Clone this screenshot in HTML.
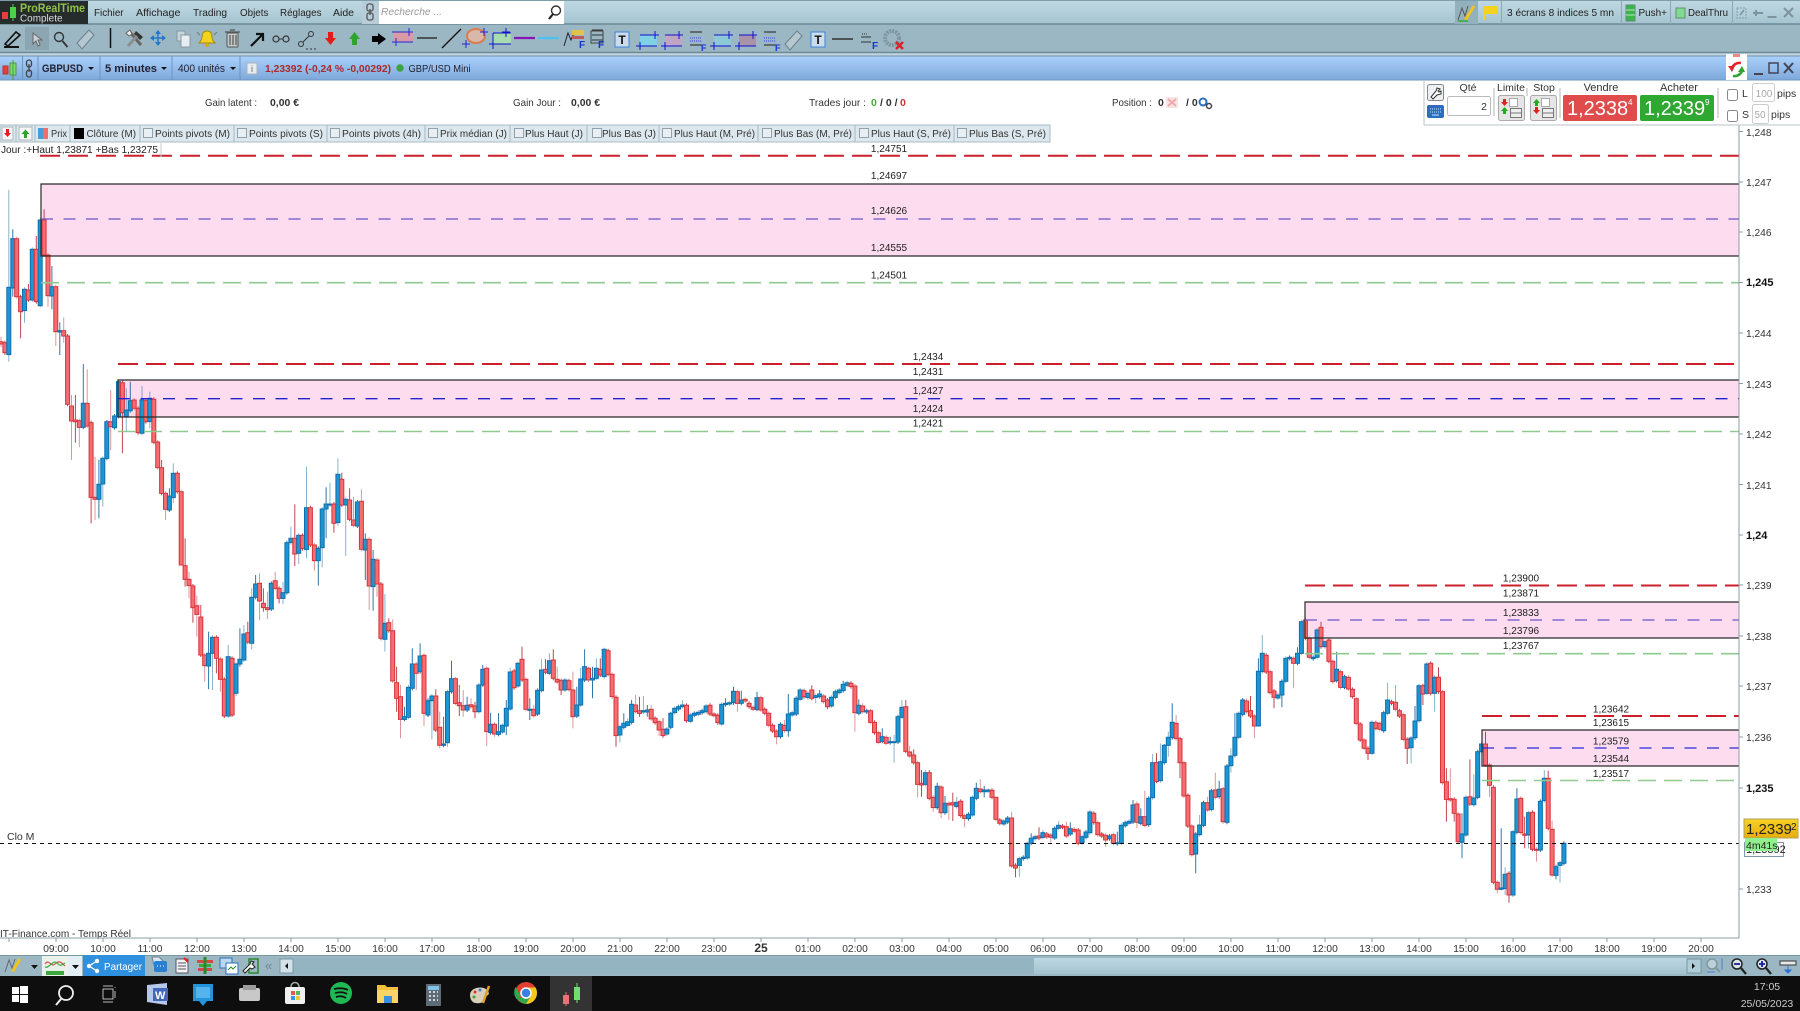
<!DOCTYPE html>
<html lang="fr"><head><meta charset="utf-8"><title>ProRealTime GBPUSD</title>
<style>
html,body{margin:0;padding:0;background:#fff;width:1800px;height:1011px;overflow:hidden}
svg{display:block;font-family:"Liberation Sans",sans-serif;font-size:10.5px;fill:#222;filter:blur(.35px)}
text{white-space:pre}
.b{font-weight:bold}
.ax{font-size:10.2px;fill:#333}
.tab{font-size:10.5px;fill:#333}
.lbl{font-size:10px;fill:#222;text-anchor:middle}
.cb{fill:#e8eef2;stroke:#8fa2ad;stroke-width:1}
.sep{stroke:#a5b8c3;stroke-width:1}
</style></head><body>
<svg id="s" xmlns="http://www.w3.org/2000/svg" width="1800" height="1011" viewBox="0 0 1800 1011">
<defs>
<linearGradient id="gm" x1="0" y1="0" x2="0" y2="1"><stop offset="0" stop-color="#c0d9e3"/><stop offset="1" stop-color="#a5c4d0"/></linearGradient>
<linearGradient id="gb" x1="0" y1="0" x2="0" y2="1"><stop offset="0" stop-color="#abd0fb"/><stop offset="1" stop-color="#7ea8da"/></linearGradient>
<linearGradient id="gy" x1="0" y1="0" x2="0" y2="1"><stop offset="0" stop-color="#f8d225"/><stop offset="1" stop-color="#e8ac0c"/></linearGradient>
<linearGradient id="gt" x1="0" y1="0" x2="0" y2="1"><stop offset="0" stop-color="#bcd7e2"/><stop offset="1" stop-color="#a4c3cf"/></linearGradient>
</defs>
<rect width="1800" height="1011" fill="#fff"/>

<!-- chart zones -->
<g fill="#fddcef">
<rect x="41" y="184" width="1698" height="72"/>
<rect x="118" y="380" width="1621" height="37"/>
<rect x="1305" y="602" width="434" height="36"/>
<rect x="1482" y="730" width="257" height="36"/>
</g>
<g id="candles"></g>
<g fill="none">
<g stroke="#2a2a2a" stroke-width="1.2">
<path d="M1739 184H41V256H1739"/>
<path d="M1739 380H118V417H1739"/>
<path d="M1739 602H1305V638H1739"/>
<path d="M1739 730H1482V766H1739"/>
</g>
<g stroke="#c9202c" stroke-width="2" stroke-dasharray="20 8">
<path d="M40 155.7H1739"/><path d="M118 364H1739"/><path d="M1305 585.5H1739"/><path d="M1482 716H1739"/>
</g>
<g stroke="#8fca8f" stroke-width="1.6" stroke-dasharray="18 8">
<path d="M41 282.7H1739"/><path d="M118 431.5H1739"/><path d="M1305 653.7H1739"/><path d="M1482 780.5H1739"/>
</g>
<g stroke-width="1.3" stroke-dasharray="12 10.5">
<path d="M41 219H1739" stroke="#6a55c8"/><path d="M118 398.7H1739" stroke="#2222cc"/><path d="M1305 620H1739" stroke="#6a55c8"/><path d="M1482 748H1739" stroke="#2828d8"/>
</g>
<path d="M0 843.5H1739" stroke="#111" stroke-width="1" stroke-dasharray="4 4"/>
</g>

<!-- level labels -->
<text class="lbl" x="889" y="152">1,24751</text>
<text class="lbl" x="889" y="179">1,24697</text>
<text class="lbl" x="889" y="214">1,24626</text>
<text class="lbl" x="889" y="251">1,24555</text>
<text class="lbl" x="889" y="278.5">1,24501</text>
<text class="lbl" x="928" y="360">1,2434</text>
<text class="lbl" x="928" y="375">1,2431</text>
<text class="lbl" x="928" y="394">1,2427</text>
<text class="lbl" x="928" y="412">1,2424</text>
<text class="lbl" x="928" y="426.500">1,2421</text>
<text class="lbl" x="1521" y="581.500">1,23900</text>
<text class="lbl" x="1521" y="596.500">1,23871</text>
<text class="lbl" x="1521" y="616">1,23833</text>
<text class="lbl" x="1521" y="634">1,23796</text>
<text class="lbl" x="1521" y="649">1,23767</text>
<text class="lbl" x="1611" y="712.500">1,23642</text>
<text class="lbl" x="1611" y="726">1,23615</text>
<text class="lbl" x="1611" y="744.500">1,23579</text>
<text class="lbl" x="1611" y="762">1,23544</text>
<text class="lbl" x="1611" y="777">1,23517</text>

<text x="7" y="840" fill="#333">Clo M</text>
<text x="0" y="937" fill="#333" textLength="131" lengthAdjust="spacingAndGlyphs">IT-Finance.com - Temps Réel</text>
<path d="M161 143V157" stroke="#ccc"/>
<text x="1" y="153" textLength="157" lengthAdjust="spacingAndGlyphs">Jour :+Haut 1,23871 +Bas 1,23275</text>

<!-- Y axis -->
<path d="M1739 125V938H0" fill="none" stroke="#8b9da6" stroke-width="1"/>
<g stroke="#8b9da6"><path d="M1739 131.5h4M1739 182h4M1739 232h4M1739 282.5h4M1739 333h4M1739 383.5h4M1739 434h4M1739 484.5h4M1739 535h4M1739 585h4M1739 636h4M1739 686h4M1739 737h4M1739 788h4M1739 889h4"/></g>
<g class="ax">
<text x="1746" y="136">1,248</text><text x="1746" y="186">1,247</text><text x="1746" y="236">1,246</text>
<text x="1746" y="286" class="b" fill="#111" font-size="11">1,245</text>
<text x="1746" y="337">1,244</text><text x="1746" y="388">1,243</text><text x="1746" y="438">1,242</text><text x="1746" y="489">1,241</text>
<text x="1746" y="539" class="b" fill="#111" font-size="11">1,24</text>
<text x="1746" y="589">1,239</text><text x="1746" y="640">1,238</text><text x="1746" y="690">1,237</text><text x="1746" y="741">1,236</text>
<text x="1746" y="792" class="b" fill="#111" font-size="11">1,235</text>
<text x="1746" y="893">1,233</text>
</g>
<rect x="1744.5" y="842.5" width="39" height="14" fill="#fff" stroke="#8596a8"/>
<text x="1746" y="853" font-size="11">1,23392</text>
<rect x="1744" y="819" width="54" height="19" fill="url(#gy)" stroke="#b3a25e"/>
<text x="1746" y="834" font-size="15" fill="#222">1,2339</text><text x="1791" y="830" font-size="10" fill="#222">2</text>
<rect x="1745" y="838" width="32" height="13" fill="#8ef08e"/>
<text x="1746" y="849" font-size="10.5" fill="#222">4m41s</text>

<!-- time axis -->
<g id="ticks" stroke="#8b9da6"></g>
<g class="ax" text-anchor="middle">
<text x="56" y="952">09:00</text><text x="103" y="952">10:00</text><text x="150" y="952">11:00</text><text x="197" y="952">12:00</text><text x="244" y="952">13:00</text><text x="291" y="952">14:00</text><text x="338" y="952">15:00</text><text x="385" y="952">16:00</text><text x="432" y="952">17:00</text><text x="479" y="952">18:00</text><text x="526" y="952">19:00</text><text x="573" y="952">20:00</text><text x="620" y="952">21:00</text><text x="667" y="952">22:00</text><text x="714" y="952">23:00</text>
<text x="761" y="952" class="b" font-size="12">25</text>
<text x="808" y="952">01:00</text><text x="855" y="952">02:00</text><text x="902" y="952">03:00</text><text x="949" y="952">04:00</text><text x="996" y="952">05:00</text><text x="1043" y="952">06:00</text><text x="1090" y="952">07:00</text><text x="1137" y="952">08:00</text><text x="1184" y="952">09:00</text><text x="1231" y="952">10:00</text><text x="1278" y="952">11:00</text><text x="1325" y="952">12:00</text><text x="1372" y="952">13:00</text><text x="1419" y="952">14:00</text><text x="1466" y="952">15:00</text><text x="1513" y="952">16:00</text><text x="1560" y="952">17:00</text><text x="1607" y="952">18:00</text><text x="1654" y="952">19:00</text><text x="1701" y="952">20:00</text>
</g>

<!-- top menu -->
<rect x="0" y="0" width="1800" height="24" fill="url(#gm)"/>
<path d="M0 .5H1800" stroke="#7f9daa"/>
<rect x="0" y="52" width="1800" height="4" fill="#c2d5de"/>
<rect x="0" y="24" width="1800" height="28" fill="#9ab7c3"/>
<path d="M0 24H1800M0 52.5H1800" stroke="#6c8a97" stroke-width="1.4"/>
<rect x="0" y="1" width="88" height="23" fill="#262c2c"/>
<rect x="2" y="12" width="6" height="7" fill="#e2403c"/><rect x="10" y="7" width="6" height="11" fill="#4cd04c"/><path d="M13 4V21" stroke="#4cd04c"/>
<text x="20" y="12" font-size="11.5" class="b" fill="#8fc346" textLength="65" lengthAdjust="spacingAndGlyphs">ProRealTime</text>
<text x="20" y="21.5" font-size="10" fill="#ddd" textLength="42.500" lengthAdjust="spacingAndGlyphs">Complete</text>
<g font-size="10.5" fill="#222">
<text x="94" y="16" textLength="29.600" lengthAdjust="spacingAndGlyphs">Fichier</text><text x="136" y="16" textLength="44.400" lengthAdjust="spacingAndGlyphs">Affichage</text><text x="193" y="16" textLength="34" lengthAdjust="spacingAndGlyphs">Trading</text><text x="240" y="16" textLength="28.400" lengthAdjust="spacingAndGlyphs">Objets</text><text x="280" y="16" textLength="41.500" lengthAdjust="spacingAndGlyphs">Réglages</text><text x="333" y="16" textLength="21" lengthAdjust="spacingAndGlyphs">Aide</text>
</g>
<rect x="362" y="1" width="17" height="23" fill="#b7cdd7"/>
<path d="M369 4h2a2 2 0 0 1 2 2v3a2 2 0 0 1-2 2h-2a2 2 0 0 1-2-2V6a2 2 0 0 1 2-2zM369 13h2a2 2 0 0 1 2 2v3a2 2 0 0 1-2 2h-2a2 2 0 0 1-2-2v-3a2 2 0 0 1 2-2zM370 9v6" fill="none" stroke="#555" stroke-width="1.3"/>
<rect x="379" y="1" width="185" height="23" fill="#fff"/>
<text x="381" y="15" font-style="italic" fill="#999" font-size="10.5" textLength="61" lengthAdjust="spacingAndGlyphs">Recherche ...</text>
<circle cx="556" cy="10.5" r="4.5" fill="none" stroke="#333" stroke-width="1.4"/><path d="M553 14l-4 5" stroke="#222" stroke-width="2.2"/>

<!-- top right -->
<rect x="1455" y="1" width="23" height="23" fill="#93b1bd"/>
<path d="M1458 20l4-12 3 8 3-10" fill="none" stroke="#555"/><path d="M1464 19l9-14 2 2-8 13z" fill="#f2c51c"/><path d="M1458 21h10" stroke="#3a3" stroke-width="1.5"/>
<path d="M1483 6h14v8h-12v6h-2z" fill="#f7d21c"/>
<rect x="1501" y="1" width="1" height="23" fill="#89a6b2"/>
<text x="1507" y="16" font-size="10.5" textLength="107" lengthAdjust="spacingAndGlyphs">3 écrans 8 indices 5 mn</text>
<rect x="1621" y="1" width="1" height="23" fill="#89a6b2"/>
<rect x="1626" y="5" width="9" height="16" fill="#3ab54a" stroke="#5f8f6f"/><path d="M1626 10h9M1626 15h9" stroke="#bfe3c8"/>
<text x="1638.500" y="16" font-size="10.5" textLength="28.500" lengthAdjust="spacingAndGlyphs">Push+</text>
<rect x="1670" y="1" width="1" height="23" fill="#89a6b2"/>
<rect x="1676" y="8" width="9" height="10" fill="#7fdc8f" stroke="#5f8f6f"/>
<text x="1688" y="16" font-size="10.5" textLength="40" lengthAdjust="spacingAndGlyphs">DealThru</text>
<rect x="1732" y="1" width="1" height="23" fill="#89a6b2"/>
<rect x="1737" y="8" width="9" height="10" fill="none" stroke="#8aa0aa" stroke-dasharray="2 1"/><path d="M1740 15l4-5" stroke="#7d939d" stroke-width="1.5"/>
<path d="M1753 13h10M1756 10v6" stroke="#7d939d" stroke-width="2"/>
<path d="M1767.500 17h9" stroke="#7d939d" stroke-width="2"/>
<path d="M1784 8l9 9M1793 8l-9 9" stroke="#7d939d" stroke-width="2"/>

<!-- toolbar icons -->
<rect x="25" y="27" width="24" height="23" fill="#8ba6b1"/>
<g transform="translate(0,2)">
<path d="M4 45h15" stroke="#111" stroke-width="2"/><path d="M5 42l11-12 4 3-12 11z" fill="none" stroke="#111" stroke-width="1.6"/>
<path d="M33 31v11l3-3 2 5 2-1-2-5h4z" fill="#c8d2d8" stroke="#666"/>
<circle cx="59" cy="35" r="4.5" fill="none" stroke="#333" stroke-width="1.4"/><path d="M62.500 39l5 6" stroke="#333" stroke-width="1.8"/>
<path d="M77 41l12-13 5 5-12 14z" fill="#b6c8cf" stroke="#6d808a"/>
<path d="M110.500 26V46" stroke="#111" stroke-width="1.5"/>
<path d="M129 29l12 14" stroke="#666" stroke-width="3"/><path d="M136 29l7 6-3 3-6-6z" fill="#333"/><path d="M128 44l9-10" stroke="#8b8f92" stroke-width="3"/><path d="M126 31l4-3 2 4-3 2z" fill="#eee" stroke="#666"/>
<path d="M158 28l3 4h-6zM158 44l3-4h-6zM150 36l4-3v6zM166 36l-4-3v6z" fill="#2477cc"/><path d="M151 36h14M158 29v14" stroke="#2477cc" stroke-width="1.5"/>
<rect x="177" y="29" width="8" height="10" fill="#c7d5dc" stroke="#8899a2"/><rect x="181" y="33" width="9" height="12" fill="#e8eef1" stroke="#8899a2"/>
<path d="M207 29c-4 0-5 3-5 6s-2 5-3 6h16c-1-1-3-3-3-6s-1-6-5-6z" fill="#f4d31f" stroke="#a08a14"/><circle cx="207" cy="43" r="2" fill="#d8a80e"/><path d="M197 30l3 3M217 30l-3 3" stroke="#777"/>
<rect x="227" y="31" width="11" height="14" rx="1" fill="#c4c9ca" stroke="#555"/><path d="M225 30h15M230 28h5M230 33v10M233 33v10M236 33v10" stroke="#555" stroke-width="1.2"/>
<path d="M251 44l11-11M256 32h7v7" fill="none" stroke="#111" stroke-width="2.2"/>
<circle cx="276" cy="37" r="3" fill="none" stroke="#333" stroke-width="1.2"/><circle cx="286" cy="37" r="3" fill="none" stroke="#333" stroke-width="1.2"/><path d="M279 37h4" stroke="#333"/>
<circle cx="301" cy="42" r="2.500" fill="none" stroke="#333"/><circle cx="311" cy="32" r="2.500" fill="none" stroke="#333"/><path d="M303 40l6-6M306 47h2M310 47h2M314 47h2" stroke="#333"/>
<path d="M328 30h5v6h3l-5.500 7-5.500-7h3z" fill="#e21b1b"/>
<path d="M352 43h5v-6h3l-5.500-7-5.500 7h3z" fill="#2ea52e"/>
<path d="M372 34h6v-3l8 6-8 6v-3h-6z" fill="#000"/>
<rect x="393" y="30" width="20" height="10" fill="#d79aa6"/><path d="M392 30h21M392 40h21M409 26v8M405 30h8M396 36v8M392 40h8" stroke="#2525d8"/>
<path d="M417 36h20" stroke="#333" stroke-width="1.500"/>
<path d="M442 46l19-19" stroke="#111" stroke-width="1.300"/>
<ellipse cx="476" cy="34" rx="9" ry="7" fill="#d8b8a8" stroke="#dd7b50" stroke-width="2"/><path d="M466 38v8M462 42h8M484 26v8M480 30h8" stroke="#2222d8"/>
<rect x="493" y="31" width="18" height="11" fill="#a8dcb0"/><path d="M493 31h18M493 42h18M493 31v16M506 26v9M502 30h8M489 42h8" stroke="#1010d0" fill="none"/>
<path d="M514 36h21" stroke="#8515b5" stroke-width="2.200"/>
<path d="M538 36h21" stroke="#4cc2f0" stroke-width="2.200"/>
<path d="M564 44l4-13 3 7 3-7" fill="none" stroke="#223"/><path d="M572 28h12v5h-12z" fill="#e0c34a"/><path d="M572 34h12v3h-12z" fill="#c05a5a"/><text x="579" y="46" font-size="10" class="b" fill="#1535d5">F</text>
<path d="M592 28h11M592 33h11M592 38h11" stroke="#333"/><rect x="591" y="29" width="12" height="12" fill="none" stroke="#444"/><text x="598" y="46" font-size="10" class="b" fill="#1535d5">F</text>
<rect x="615" y="30" width="14" height="15" fill="#cbdcea" stroke="#3f83d9"/><text x="622" y="42" text-anchor="middle" class="b" font-size="12" fill="#111">T</text>
<rect x="640" y="33" width="17" height="11" fill="#7fd2e4"/><path d="M640 33h17M640 44h17M655 29v8M651 33h8M640 40v8M636 44h8" stroke="#1010d0"/>
<rect x="665" y="33" width="17" height="11" fill="#bfa6c4"/><path d="M665 33h17M665 44h17M679 29v8M675 33h8M665 40v8M661 44h8" stroke="#1010d0"/>
<path d="M690 30h12M690 43h12" stroke="#222"/><path d="M690 36h12M690 39h12" stroke="#3a3ad8" stroke-dasharray="1 1"/><text x="701" y="49" font-size="9" class="b" fill="#1535d5">F</text>
<rect x="714" y="33" width="17" height="11" fill="#8cc8d8"/><path d="M714 33h17M714 44h17M729 29v8M725 33h8M714 40v8M710 44h8" stroke="#1010d0"/>
<rect x="739" y="33" width="17" height="11" fill="#a893a8"/><path d="M739 33h17M739 44h17M753 29v8M749 33h8M739 40v8M735 44h8" stroke="#1010d0"/>
<path d="M764 30h12M764 43h12" stroke="#222"/><path d="M764 36h12M764 39h12" stroke="#3a3ad8" stroke-dasharray="1 1"/><text x="775" y="49" font-size="9" class="b" fill="#1535d5">F</text>
<path d="M785 42l12-13 5 5-12 14z" fill="#b6c8cf" stroke="#6d808a"/>
<rect x="811" y="30" width="14" height="15" fill="#cbdcea" stroke="#3f83d9"/><text x="818" y="42" text-anchor="middle" class="b" font-size="12" fill="#111">T</text>
<path d="M832 37h21" stroke="#333" stroke-width="1.500"/>
<path d="M861 35h10M861 40h10" stroke="#333"/><path d="M862 32h6" stroke="#333" stroke-dasharray="1 1"/><text x="872" y="47" font-size="10" class="b" fill="#1535d5">F</text>
<circle cx="892" cy="36" r="7" fill="none" stroke="#7f95a0" stroke-width="4" stroke-dasharray="2 1"/><path d="M896 40l7 7M903 40l-7 7" stroke="#d8232a" stroke-width="2.500"/>
</g>

<!-- blue bar -->
<rect x="0" y="56" width="1800" height="24" fill="url(#gb)"/>
<path d="M0 56H1800" stroke="#6f8faf"/><path d="M0 80H1800" stroke="#6e96bf"/>
<path d="M22.500 56V80M38 56V80M100 56V80M172 56V80M240 56V80" stroke="#6e93bd"/>
<rect x="3" y="66" width="5" height="8" fill="#e2403c" stroke="#b33"/><rect x="10" y="63" width="6" height="12" fill="#7fde6a" stroke="#4a9a40"/><path d="M13 60v20" stroke="#4a9a40"/>
<path d="M29 60a2.500 2.500 0 0 1 2.500 2.500v2a2.500 2.500 0 0 1-5 0v-2a2.500 2.500 0 0 1 2.500-2.500zM29 70a2.500 2.500 0 0 1 2.500 2.500v2a2.500 2.500 0 0 1-5 0v-2a2.500 2.500 0 0 1 2.500-2.500zM29 64v8" fill="none" stroke="#444" stroke-width="1.300"/>
<text x="42" y="72" class="b" font-size="11" fill="#223" textLength="41" lengthAdjust="spacingAndGlyphs">GBPUSD</text><path d="M88 67h6l-3 3z" fill="#111"/>
<text x="105" y="72" class="b" font-size="11" fill="#223" textLength="52" lengthAdjust="spacingAndGlyphs">5 minutes</text><path d="M161 67h6l-3 3z" fill="#111"/>
<text x="178" y="72" font-size="11" fill="#223" textLength="47" lengthAdjust="spacingAndGlyphs">400 unités</text><path d="M230 67h6l-3 3z" fill="#111"/>
<rect x="247" y="63" width="10" height="11" fill="#e6ecef" stroke="#a5b4bc"/><text x="252" y="72" text-anchor="middle" font-size="9" fill="#666">i</text>
<text x="265" y="72" class="b" font-size="10.5" fill="#a92a2a" textLength="126" lengthAdjust="spacingAndGlyphs">1,23392 (-0,24 % -0,00292)</text>
<circle cx="400" cy="68" r="3.700" fill="#3ea33e"/>
<text x="408.500" y="72" font-size="10.5" fill="#223" textLength="62" lengthAdjust="spacingAndGlyphs">GBP/USD Mini</text>
<rect x="1726" y="54" width="21" height="26" fill="#fff"/>
<rect x="1733" y="54" width="7" height="3" fill="#e88"/>
<path d="M1741 63a8 8 0 0 0-9 5" fill="none" stroke="#e0262c" stroke-width="2.500"/><path d="M1728 66h7l-3 6z" fill="#e0262c"/>
<path d="M1733 76a8 8 0 0 0 9-5" fill="none" stroke="#2ea52e" stroke-width="2.500"/><path d="M1738 72h7l-3-6z" fill="#2ea52e"/>
<path d="M1754 74h9" stroke="#445" stroke-width="2"/><rect x="1769" y="63" width="9" height="10" fill="none" stroke="#445" stroke-width="1.500"/><path d="M1784 63l9 10M1793 63l-9 10" stroke="#445" stroke-width="2"/>

<!-- info row -->
<rect x="0" y="81" width="1800" height="44" fill="#fff"/>
<path d="M0 125H1050M1424 125H1800" stroke="#b8c3c9"/>
<text x="205" y="106" fill="#333" textLength="52" lengthAdjust="spacingAndGlyphs">Gain latent :</text><text x="270" y="106" class="b" fill="#333" textLength="29" lengthAdjust="spacingAndGlyphs">0,00 €</text>
<text x="513" y="106" fill="#333" textLength="48" lengthAdjust="spacingAndGlyphs">Gain Jour :</text><text x="571" y="106" class="b" fill="#333" textLength="29" lengthAdjust="spacingAndGlyphs">0,00 €</text>
<text x="809" y="106" fill="#333" textLength="57" lengthAdjust="spacingAndGlyphs">Trades jour :</text><text x="871" y="106" class="b" fill="#49a83a">0</text><text x="880" y="106" class="b" fill="#333">/ 0 /</text><text x="900" y="106" class="b" fill="#c33">0</text>
<text x="1112" y="106" fill="#333" textLength="40" lengthAdjust="spacingAndGlyphs">Position :</text><text x="1158" y="106" class="b" fill="#333">0</text>
<rect x="1166" y="97" width="12" height="11" fill="#f7e4e4"/><path d="M1168 99l8 7M1176 99l-8 7" stroke="#f0a8a8" stroke-width="2"/><text x="1186" y="106" class="b" fill="#333">/ 0</text>
<circle cx="1203" cy="102" r="3.500" fill="none" stroke="#2b6fc0" stroke-width="2"/><circle cx="1209" cy="106" r="2.500" fill="none" stroke="#444" stroke-width="1.500"/>

<!-- order panel -->
<path d="M1424 81V125" stroke="#b8c3c9"/>
<rect x="1427.500" y="84.500" width="16" height="16" rx="2" fill="#eef1f3" stroke="#888"/><path d="M1431 97l5-6 1-3 3 1-2 2 1 1 2-1 0 3-4 1-4 4z" fill="#fff" stroke="#333"/>
<rect x="1427" y="105" width="17" height="13" rx="2" fill="#2a6ec0"/><path d="M1430 109h11M1430 112h11" stroke="#cfe2f7" stroke-dasharray="1 1"/><path d="M1432 115h7" stroke="#cfe2f7"/>
<text x="1468" y="91" text-anchor="middle" fill="#333">Qté</text>
<rect x="1447.500" y="96.500" width="43" height="19" rx="2" fill="#fff" stroke="#bbb"/><text x="1487" y="110" text-anchor="end" fill="#333">2</text>
<path d="M1494 88V116M1527 88V96M1560 88V118M1718 88V118" stroke="#b5b5b5"/>
<text x="1511" y="91" text-anchor="middle" fill="#333">Limite</text>
<rect x="1498.500" y="95.500" width="26" height="25" rx="2" fill="#e5e5e5" stroke="#aaa"/>
<path d="M1503 99h3v3h2l-3.500 4-3.500-4h2z" fill="#d22"/><path d="M1503 114h3v-3h2l-3.500-4-3.500 4h2z" fill="#2a2"/><rect x="1509.500" y="98.500" width="8" height="8" fill="#fff" stroke="#aaa"/><rect x="1510.500" y="108.500" width="11" height="9" fill="#eee" stroke="#777"/><path d="M1511 113h11" stroke="#777"/>
<text x="1544" y="91" text-anchor="middle" fill="#333">Stop</text>
<rect x="1530.500" y="95.500" width="26" height="25" rx="2" fill="#e5e5e5" stroke="#aaa"/>
<path d="M1535 106h3v-3h2l-3.500-4-3.500 4h2z" fill="#2a2"/><path d="M1535 107h3v3h2l-3.500 4-3.500-4h2z" fill="#d22"/><rect x="1541.500" y="98.500" width="8" height="8" fill="#fff" stroke="#aaa"/><rect x="1542.500" y="108.500" width="11" height="9" fill="#eee" stroke="#777"/><path d="M1543 113h11" stroke="#777"/>
<text x="1601" y="91" text-anchor="middle" fill="#333" font-size="11">Vendre</text>
<rect x="1563" y="95" width="74" height="26" rx="2" fill="#e04b4b"/>
<text x="1567" y="115" font-size="20" fill="#fff">1,2338</text><text x="1628" y="105" font-size="8" fill="#fff">4</text>
<text x="1679" y="91" text-anchor="middle" fill="#333" font-size="11">Acheter</text>
<rect x="1640" y="95" width="74" height="26" rx="2" fill="#2fa831"/>
<text x="1644" y="115" font-size="20" fill="#fff">1,2339</text><text x="1705" y="105" font-size="8" fill="#fff">9</text>
<rect x="1727.500" y="89.500" width="10" height="11" rx="2" fill="#fff" stroke="#888"/><text x="1742" y="97" fill="#333" font-size="10.5">L</text>
<rect x="1752.500" y="83.500" width="22" height="18" rx="2" fill="#fff" stroke="#ccc"/><text x="1764" y="97" text-anchor="middle" fill="#aaa" font-size="10">100</text><text x="1777" y="97" fill="#333" font-size="10.5">pips</text>
<rect x="1727.500" y="110.500" width="10" height="11" rx="2" fill="#fff" stroke="#888"/><text x="1742" y="118" fill="#333" font-size="10.5">S</text>
<rect x="1752.500" y="104.500" width="16" height="19" rx="2" fill="#fff" stroke="#ccc"/><text x="1760" y="118" text-anchor="middle" fill="#aaa" font-size="10">50</text><text x="1771" y="118" fill="#333" font-size="10.5">pips</text>

<!-- indicator tabs -->
<rect x="0" y="125" width="1050" height="17" fill="#dde8ee" stroke="#a9bcc6"/>
<rect x="2" y="127" width="11" height="13" fill="#f6f6f6" stroke="#a9b7bf"/><path d="M6 129h3v4h2l-3.500 4-3.500-4h2z" fill="#e22020"/>
<rect x="19" y="127" width="13" height="13" fill="#f6f6f6" stroke="#a9b7bf"/><path d="M24 138h3v-4h2.500l-4-4.500-4 4.500h2.500z" fill="#2aa52a"/>
<rect x="38" y="128" width="5" height="11" fill="#4a9bdc"/><rect x="43" y="128" width="5" height="11" fill="#ef6f6f"/>
<text x="51" y="137" class="tab" textLength="16" lengthAdjust="spacingAndGlyphs">Prix</text>
<rect x="74" y="128" width="10" height="11" fill="#000"/>
<text x="86.500" y="137" class="tab" textLength="49.500" lengthAdjust="spacingAndGlyphs">Clôture (M)</text>
<g class="cb">
<rect x="143.500" y="128.500" width="9" height="9"/><rect x="237.500" y="128.500" width="9" height="9"/><rect x="330.500" y="128.500" width="9" height="9"/><rect x="428.500" y="128.500" width="9" height="9"/><rect x="514.500" y="128.500" width="9" height="9"/><rect x="592.500" y="128.500" width="9" height="9"/><rect x="662.500" y="128.500" width="9" height="9"/><rect x="762.500" y="128.500" width="9" height="9"/><rect x="859.500" y="128.500" width="9" height="9"/><rect x="957.500" y="128.500" width="9" height="9"/>
</g>
<text x="155" y="137" class="tab" textLength="75" lengthAdjust="spacingAndGlyphs">Points pivots (M)</text>
<text x="249" y="137" class="tab" textLength="74" lengthAdjust="spacingAndGlyphs">Points pivots (S)</text>
<text x="342" y="137" class="tab" textLength="79" lengthAdjust="spacingAndGlyphs">Points pivots (4h)</text>
<text x="440" y="137" class="tab" textLength="67" lengthAdjust="spacingAndGlyphs">Prix médian (J)</text>
<text x="525" y="137" class="tab" textLength="58" lengthAdjust="spacingAndGlyphs">Plus Haut (J)</text>
<text x="602" y="137" class="tab" textLength="54" lengthAdjust="spacingAndGlyphs">Plus Bas (J)</text>
<text x="674" y="137" class="tab" textLength="81" lengthAdjust="spacingAndGlyphs">Plus Haut (M, Pré)</text>
<text x="774" y="137" class="tab" textLength="78" lengthAdjust="spacingAndGlyphs">Plus Bas (M, Pré)</text>
<text x="871" y="137" class="tab" textLength="80" lengthAdjust="spacingAndGlyphs">Plus Haut (S, Pré)</text>
<text x="969" y="137" class="tab" textLength="77" lengthAdjust="spacingAndGlyphs">Plus Bas (S, Pré)</text>
<path class="sep" d="M16 125v17M35 125v17M70 125v17M140 125v17M234 125v17M327 125v17M425 125v17M510 125v17M587 125v17M659 125v17M758 125v17M855 125v17M954 125v17"/>

<!-- bottom toolbar -->
<rect x="0" y="955" width="1800" height="21" fill="#9ab7c3"/>
<path d="M0 955.500H1800" stroke="#7a99a6"/>
<path d="M5 972l4-12 3 8 3-9" fill="none" stroke="#667"/><path d="M11 971l8-13 2 2-7 12z" fill="#f2c51c"/>
<path d="M31 965h7l-3.500 4z" fill="#111"/>
<rect x="42" y="956" width="26" height="20" fill="#e9f1ea"/>
<path d="M45 964c4-6 6 4 10 0s6-2 10 2" fill="none" stroke="#d4534e" stroke-width="1.200"/><path d="M45 967c4 2 8-8 12-4s4 2 8 0" fill="none" stroke="#3da83d" stroke-width="1.200"/><rect x="46" y="971" width="18" height="4" fill="#3da83d"/>
<rect x="68" y="956" width="14" height="20" fill="#e4eef5"/><path d="M72 965h7l-3.500 4z" fill="#111"/>
<rect x="83" y="955" width="62" height="21" fill="#2f90e0"/>
<circle cx="97" cy="961" r="2.200" fill="#fff"/><circle cx="97" cy="971" r="2.200" fill="#fff"/><circle cx="89" cy="966" r="2.200" fill="#fff"/><path d="M97 961l-8 5 8 5" fill="none" stroke="#fff" stroke-width="1.300"/>
<text x="104" y="970" font-size="10.5" fill="#fff" textLength="38" lengthAdjust="spacingAndGlyphs">Partager</text>
<path d="M152 957h7l4 4v4h-9z" fill="#dce6ee" stroke="#6a8296"/><rect x="154" y="961" width="13" height="11" rx="2" fill="#2a7fd0"/><path d="M157 966h1M160 966h1M163 966h1" stroke="#fff"/>
<rect x="176" y="959" width="12" height="14" fill="#f2f2f2" stroke="#556"/><path d="M178 963h8M178 966h8M178 969h8" stroke="#556"/><path d="M184 958l4 4" stroke="#d22" stroke-width="2"/>
<rect x="197" y="960" width="16" height="3" fill="#d84848"/><rect x="199" y="964" width="12" height="3" fill="#38a938"/><rect x="198" y="968" width="14" height="3" fill="#d84848"/><path d="M205 957v17" stroke="#2a8a2a" stroke-width="3"/>
<rect x="220" y="958" width="12" height="10" fill="#bcd8f0" stroke="#2a6fc0"/><rect x="226" y="963" width="12" height="11" fill="#fff" stroke="#2a6fc0"/><path d="M228 970l3-3 2 2 3-3" fill="none" stroke="#2a8a2a"/>
<rect x="249" y="959" width="9" height="14" fill="none" stroke="#2a8a2a" stroke-width="1.500"/><path d="M243 971l7-7 1-3 3 1-2 2 3 3-3 2-2-1-5 5z" fill="#fff" stroke="#222"/>
<text x="265" y="970" font-size="13" fill="#6d8895">«</text>
<rect x="280" y="958" width="1427" height="16" fill="#94b4c1"/>
<rect x="1034" y="958" width="653" height="16" fill="url(#gt)"/>
<rect x="280" y="959" width="13" height="14" fill="#d3e2e8" stroke="#7a96a3"/><path d="M288 963v6l-3-3z" fill="#111"/>
<rect x="1687" y="959" width="14" height="14" fill="#afccd8" stroke="#7a96a3"/><path d="M1692 963v6l3-3z" fill="#111"/>
<circle cx="1712" cy="964" r="5" fill="#bcd0d8" stroke="#7f959f" stroke-width="1.500"/><path d="M1716 968l4 4" stroke="#7f959f" stroke-width="2"/><path d="M1722 958v12M1707 972h8" stroke="#4c7fd0"/>
<circle cx="1737" cy="964" r="5" fill="#dce6ea" stroke="#222" stroke-width="1.500"/><path d="M1734 964h6" stroke="#14209c" stroke-width="1.800"/><path d="M1741 968l5 6" stroke="#222" stroke-width="2.200"/>
<circle cx="1762" cy="964" r="5" fill="#dce6ea" stroke="#222" stroke-width="1.500"/><path d="M1759 964h6M1762 961v6" stroke="#14209c" stroke-width="1.800"/><path d="M1766 968l5 6" stroke="#222" stroke-width="2.200"/>
<rect x="1780" y="961" width="16" height="4" fill="#e8e8e8" stroke="#333"/><path d="M1788 966v5M1785 970h6l-3 3z" fill="#2a6fd8" stroke="#2a6fd8"/>

<!-- taskbar -->
<rect x="0" y="976" width="1800" height="35" fill="#0e0e0e"/>
<g fill="#fff"><rect x="12" y="987" width="7" height="7"/><rect x="20" y="986" width="8" height="8"/><rect x="12" y="995" width="7" height="7"/><rect x="20" y="995" width="8" height="8"/></g>
<circle cx="66" cy="993" r="7" fill="none" stroke="#eee" stroke-width="1.800"/><path d="M61 999l-5 6" stroke="#eee" stroke-width="2"/>
<path d="M103 986h10M103 1002h10M115 987v1M115 991v7" stroke="#bbb"/><rect x="103" y="989" width="10" height="10" fill="none" stroke="#bbb"/>
<path d="M147 985l20-2v22l-20-3z" fill="#b6c8ea"/><rect x="153" y="988" width="15" height="13" fill="#4468b8"/><text x="155" y="999" font-size="11" class="b" fill="#fff">W</text>
<rect x="193" y="984" width="20" height="17" fill="#2294dc"/><path d="M199 1001h8l-4 5z" fill="#2294dc"/><rect x="196" y="987" width="14" height="11" fill="#55b4ee"/>
<rect x="239" y="988" width="21" height="13" rx="2" fill="#c8c8c8"/><rect x="243" y="985" width="13" height="5" fill="#9c9c9c"/>
<rect x="285" y="987" width="20" height="17" rx="2" fill="#f0f0f0"/><path d="M291 987c0-6 8-6 8 0" fill="none" stroke="#aaa" stroke-width="1.500"/><rect x="291" y="991" width="4" height="4" fill="#e55"/><rect x="296" y="991" width="4" height="4" fill="#5b5"/><rect x="291" y="996" width="4" height="4" fill="#39e"/><rect x="296" y="996" width="4" height="4" fill="#ec3"/>
<circle cx="341" cy="993" r="11" fill="#1fb954"/><path d="M334 989c5-1 10-1 14 1M335 993c4-1 9-1 12 1M336 997c3-1 7-1 10 1" fill="none" stroke="#111" stroke-width="1.800"/>
<path d="M377 985h8l2 2h11v16h-21z" fill="#f3c03e"/><rect x="377" y="990" width="21" height="13" fill="#f9d468"/><rect x="384" y="996" width="8" height="7" fill="#3a8fe0"/>
<rect x="426" y="984" width="15" height="22" fill="#5d6b75"/><rect x="428" y="986" width="11" height="4" fill="#7fc3e8"/><path d="M429 992h2M433 992h2M437 992h1M429 996h2M433 996h2M437 996h1M429 1000h2M433 1000h2M437 1000h1" stroke="#cfd5da" stroke-width="2"/>
<path d="M470 995c0-8 14-10 18-4 3 5-3 4-3 7 0 4-5 6-9 5-4 0-6-4-6-8z" fill="#d9cfbb"/><circle cx="475" cy="992" r="1.500" fill="#d33"/><circle cx="480" cy="990" r="1.500" fill="#38c"/><circle cx="474" cy="997" r="1.500" fill="#3a3"/><path d="M483 1003l6-17" stroke="#e0a020" stroke-width="2.500"/>
<circle cx="526" cy="993" r="11" fill="#e33e2f"/><path d="M526 1004a11 11 0 0 0 9.500-16.500H526l5 8z" fill="#f7c71c"/><path d="M516.500 999a11 11 0 0 1-1-12L521 996z" fill="#2fa84f"/><path d="M517 998a11 11 0 0 0 9 6l4-7z" fill="#2fa84f"/><circle cx="526" cy="993" r="5" fill="#3a7fe6" stroke="#fff" stroke-width="1.500"/>
<rect x="550" y="976" width="42" height="35" fill="#333"/>
<rect x="563" y="995" width="6" height="9" fill="#ef6f76"/><path d="M566 992v14" stroke="#ef6f76"/><rect x="574" y="987" width="6" height="13" fill="#72de72"/><path d="M577 983v20" stroke="#72de72"/>
<text x="1767" y="990" text-anchor="middle" font-size="10.5" fill="#ccc">17:05</text>
<text x="1767" y="1007" text-anchor="middle" font-size="10.5" fill="#ccc">25/05/2023</text>
</svg>
<script>
var S=[[160,0,"r545,552,530,562 r548,578,,585 b382,584,90,605 b236,384,208,410 r236,410 r410,455,,535 b388,452,,488 r390,420,372 b268,420 r268,425,228 b180,437,,442 r180,285,148 r285,407,,440 b380,408,318,448 r380,515,,558 b512,516,487,585 r512,528,472,548 r528,733 r738,783,705,900 r780,785,705,848 r782,802,,862 b730,802,612 r730,798,628 r788,1012,,1090 r1012,1018,890,1080 b973,1018,900,1075 b895,972,,1040 b785,895,780 r785,800,690,870 b768,803 b665,770 r668,758,,880 b750,770,685,815 b722,752,665 r720,745 r745,818 b720,820,678 r722,785 b715,785,695,805 r718,847"],
[440,40,"r6,83 r83,160,60 r160,208,,240 b168,210,145 b100,173,70,190 r100,155 r155,375,,215 r377,418,295,440 r418,437,395,475 r438,503,,548 r497,523,467,590 r531,645,495 r645,677,,725 b640,678,575,748 b592,640,,750 r592,655,,700 r657,718,,755 r718,828 b650,828,615 r655,825 b672,760,,768 b658,672,565,680 b582,660,555 r578,606,545 b472,610,445,628 b432,472,405 r430,483,400,540 r490,503,445,515 r503,509,455,537 b430,507 r422,445,395 r445,475,,490 b458,475,425,492 b308,458 b295,308,260 r295,342,193,378 b286,340,,372 r286,326 b203,328,80,355 r203,315 r315,362,,392 b325,362,,437 b207,323,,382 b192,207,142,295 b192,195,128 r192,250,,278 b103,248,55,258 r118,195,98 b178,195,,348 r180,238,145 r240,256,170 b186,258,180 r184,328,148 b298,330,280,420 r298,438,,510 b358,440,330,512 r360,432,,470 r432,595 b550,598,462,635 r548,572,535 r572,723,538 r728,775,680,815 r770,838,735,895 b830,838,800 b742,832,735 b672,745,625 r672,700,,750 b648,695,610 r646,820,,858 b782,825,775 b768,782,,898 r768,870,748 r862,916,815,925 b912,916,830 b755,908,,920 b716,755,662 r716,790 r788,797,735,828 r797,810,750,830 b796,810,770 r794,800,775 r798,815,785,835 b735,815 b688,735,675 r685,875,,918 b853,878,818 r853,882,,890 b875,883,820"],
[620,128,"b316,336 b265,318,240,345 b156,267,143 r153,203 b130,198,125 r118,180,80 r178,268 b268,270,235,300 r268,287,255 b211,282 b150,212,118 r148,157,118 b122,160,100 r120,175,88 r178,186,140 r182,210,,225 b180,210 r182,208 r210,290,155,325 b255,288,200 b177,255,143 b140,180,88 r145,180,140 b175,180,140,235 b145,175,115 r148,165,115 b88,170,83 r92,163 r163,230 r232,347,,380 b320,345,,367 b310,322,280 b305,316,295,320 b253,307,240 r255,275,225 r272,280,230,290 b272,276,228 b270,276,255,290 r268,297,255 r295,308 r305,330,,348 r328,347,295 b327,342,,348 b280,322,275 b265,278 b260,267 b255,260,240 r256,302 b285,304 b280,286 b277,283 b272,278 b258,275 r256,282 r282,287 r286,308 b253,312 b250,254,235 b248,252 b214,248,200 r215,250,,275 b240,250,212 r238,243 r250,260 r262,268 b233,268,215 r233,270 r268,280 r280,316 r316,333 r333,350,,373 b313,350 r316,332,300 b282,332,222,350 b278,285 b235,282 b210,238 r212,230 b220,233 r210,235,196 b227,232,,250 b222,230,210 r228,245 r240,260,,268 b232,258 b215,232 b210,218 b193,212,182 b188,196,182 r190,200 r198,278,,335 b256,280,238 r258,275,250 b272,276 r272,307 r307,338 r338,367 b350,364,325 r352,370 b365,368,350 b365,368,345,428 b290,366 b262,292,240 r260,394,240 r396,408,378 r405,428,388 r428,493,,532 r490,495,450,530 b458,493,450 r458,535,450 r532,563,,575 b499,563,488 r501,578,,595 b550,578,528 r550,555,,600 r548,555,518,603 b547,560,530 r544,587 r587,595,,622 b583,596,,602 b532,585 b505,535,488 r507,515,478 b510,515,498,532 b510,514,505 r511,532 r532,598,530 r600,610 b603,612 b594,606 r594,738,575 r736,744,,772 b716,736,,770 b712,716 b670,714 b655,670,640 b650,656 r648,654,622 b638,652,630 r642,650 r645,652,,668 b625,654 b616,625,603 r618,622 r620,648,605 b626,642,607 r628,634 r630,670 b650,668 b636,652 b576,638 r580,608 r608,644 r642,648 r646,660,,680 b648,656 r644,670 b668,671,635 b616,670 b608,617 b604,610 b555,606,540 r552,607,545,625 b590,610,565 r590,616,512 b535,614 b428,533,402 r428,484,400 b425,482,370 b376,428,372 b352,376,335,410 b307,353,250 r310,356,285 r356,428,,475 r428,528 r526,618 r618,704 b642,702,,760 b615,644,585 b548,616 r548,570,530 b512,568 r510,532,458 b508,530,482 r506,605 b438,607 b408,437,385,458 b352,406,280 b280,352 b240,283 r243,275,235 r272,288,228 r288,318,,355 b154,318,115,185 b100,155,45 r106,156 r155,218 r213,232,,265 b225,234 b184,225,,262 b115,184 b112,116 r115,130,,205 b100,130,82 b5,100 r0,55 r55,112 b112,116 b30,112 r22,80,5 b65,80 r60,124 r124,185 b148,182,95 r155,202 b170,202 r172,207 r208,230 r236,310 r312,360 r360,385 r385,400,,420 b307,400 r308,325 r310,328 b278,332 b240,280,188 r245,250 r247,268,195 r272,288"],
[640,358,"r224,298 r298,325,,372 b294,323,,370 b243,293,198 b137,242 r137,162,,195 b72,160 r70,160 b112,160,,215 r112,155,82 r155,428 r425,478,385,545 r476,480,385 r478,520,,545 r522,605 b582,607,520,655 b472,585 r470,492,358 b474,494,403 b335,472 b312,335 r312,375,275 r375,436,,470 r442,727 r727,748,,760 b744,748,565,750 b703,746,682,765 r700,765,,788 b575,765 b477,577,445 r475,578 r582,586,530,625 b518,585,,625 r517,628 r628,630,,665 b484,630 b415,482,390 r415,565,392 r568,705,542 b680,706,,718 b668,676,,728 b610,670"]];
var NS="http://www.w3.org/2000/svg",g=document.getElementById("candles");
function el(n,a){var e=document.createElementNS(NS,n);for(var k in a)e.setAttribute(k,a[k]);g.appendChild(e);}
S.forEach(function(s){var off=s[0],i=s[1];s[2].split(" ").forEach(function(t){
 var red=t[0]=="r",v=t.slice(1).split(","),Y=function(z){return off+z/3;},top=Y(+v[0]),bot=Y(+v[1]);
 var hi=v[2]?Y(+v[2]):top-2,lo=v[3]?Y(+v[3]):bot+2,x=1+3.917*i;
 el("path",{d:"M"+x.toFixed(1)+" "+hi.toFixed(1)+"V"+lo.toFixed(1),stroke:red?"#b8323a":"#17699c","stroke-width":1,opacity:i%2==0?.5:.9});
 el("rect",{x:(x-2).toFixed(1),y:top.toFixed(1),width:4,height:Math.max(bot-top,1).toFixed(1),fill:red?"#f36d71":"#1b96d3",stroke:red?"#d8333b":"#0f6eac","stroke-width":1});
 i++;});});
var tk=document.getElementById("ticks"),d="";for(var x=9;x<1739;x+=47)d+="M"+x+" 938v4";var p=document.createElementNS(NS,"path");p.setAttribute("d",d);tk.appendChild(p);
</script>
</body></html>
